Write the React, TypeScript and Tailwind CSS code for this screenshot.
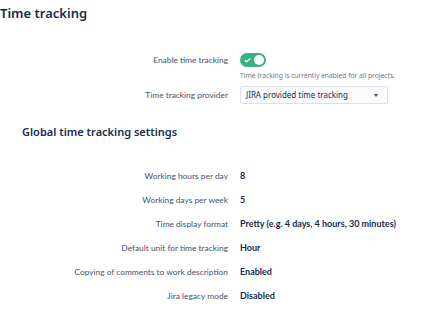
import { Check } from "lucide-react";

const rows: [string, string][] = [
  ["Working hours per day", "8"],
  ["Working days per week", "5"],
  ["Time display format", "Pretty (e.g. 4 days, 4 hours, 30 minutes)"],
  ["Default unit for time tracking", "Hour"],
  ["Copying of comments to work description", "Enabled"],
  ["Jira legacy mode", "Disabled"],
];

export default function App() {
  return (
    <div className="h-[311px] w-[428px] overflow-hidden bg-white font-['Noto_Sans',sans-serif] text-[#172b4d]">
      <h1 className="pt-[3px] text-[13px] font-semibold leading-[20px]">Time tracking</h1>

      <div className="mt-[30px] grid grid-cols-[228px_1fr] gap-x-[12px]">
        <div className="text-right font-['Lato',sans-serif] text-[8.4px] leading-[14px] text-[#42526e]">Enable time tracking</div>
        <div>
          <button className="flex h-[14px] w-[26px] items-center justify-between rounded-full bg-[#36b37e] px-[2px]">
            <Check className="ml-[2px] h-[7px] w-[7px] text-white" strokeWidth={4} />
            <span className="h-[10px] w-[10px] rounded-full bg-white" />
          </button>
          <p className="mt-[4px] text-[6.7px] leading-[9px] text-[#6b778c]">
            Time tracking is currently enabled for all projects.
          </p>
        </div>

        <div className="mt-[6px] text-right font-['Lato',sans-serif] text-[8.4px] leading-[18px] text-[#42526e]">Time tracking provider</div>
        <div className="mt-[6px]">
          <div className="flex h-[18px] w-[148px] items-center justify-between rounded-[2px] border border-[#dfe1e6] bg-[#fafbfc] pl-[5px] pr-[9px] text-[8px] text-[#172b4d]">
            <span>JIRA provided time tracking</span>
            <span className="h-0 w-0 border-x-[2.5px] border-t-[3px] border-x-transparent border-t-[#42526e]" />
          </div>
        </div>
      </div>

      <h2 className="ml-[22px] mt-[19px] text-[11px] font-semibold leading-[18px]">Global time tracking settings</h2>

      <div className="mt-[28px] grid grid-cols-[228px_1fr] gap-x-[12px] gap-y-[10px]">
        {rows.map(([label, value]) => (
          <div key={label} className="contents">
            <div className="text-right font-['Lato',sans-serif] text-[8.4px] leading-[14px] text-[#42526e]">{label}</div>
            <div className="font-['Lato',sans-serif] text-[9px] font-bold leading-[14px] text-[#172b4d]">{value}</div>
          </div>
        ))}
      </div>
    </div>
  );
}
